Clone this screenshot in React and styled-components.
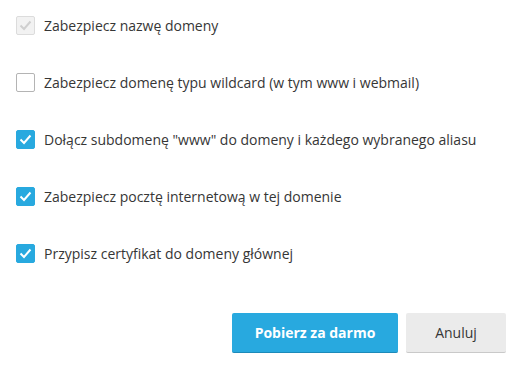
import React from "react";
import styled, { createGlobalStyle } from "styled-components";

const Global = createGlobalStyle`
  body {
    margin: 0;
    background: #fff;
    font-family: "Open Sans", "Liberation Sans", sans-serif;
    color: #363636;
  }
`;

const Dialog = styled.div`
  width: 517px;
  height: 369px;
  box-sizing: border-box;
  padding: 16px 11px 0 16px;
  display: flex;
  flex-direction: column;
`;

const Options = styled.div`
  display: flex;
  flex-direction: column;
  gap: 38px;
`;

const Row = styled.label`
  display: flex;
  align-items: center;
  gap: 9px;
  height: 19px;
  font-size: 14px;
  line-height: 19px;
`;

const Box = styled.span`
  width: 19px;
  height: 19px;
  box-sizing: border-box;
  border-radius: 2px;
  display: flex;
  align-items: center;
  justify-content: center;
  flex-shrink: 0;
  border: 1px solid
    ${p => (p.$state === "checked" ? "#28a9df" : p.$state === "disabled" ? "#dcdcdc" : "#b4b4b4")};
  background: ${p => (p.$state === "checked" ? "#28a9df" : p.$state === "disabled" ? "#f2f2f2" : "#fff")};
`;

const Actions = styled.div`
  margin-top: 50px;
  display: flex;
  justify-content: flex-end;
  gap: 8px;
`;

const Button = styled.button`
  height: 40px;
  width: ${p => p.$width}px;
  box-sizing: border-box;
  border: none;
  border-radius: 2px;
  font-family: "Open Sans", "Liberation Sans", sans-serif;
  font-size: 14px;
  font-weight: ${p => (p.$primary ? 700 : 400)};
  color: ${p => (p.$primary ? "#fff" : "#363636")};
  background: ${p => (p.$primary ? "#28a9df" : "#ebebeb")};
  border-bottom: 1px solid ${p => (p.$primary ? "#1d8ab9" : "#c9c9c9")};
`;

const Check = ({ color }) => (
  <svg width="13" height="11" viewBox="0 0 13 11">
    <path d="M1.5 5.5 L5 9 L11.5 1.5" fill="none" stroke={color} strokeWidth="2" />
  </svg>
);

const options = [
  { label: "Zabezpiecz nazwę domeny", state: "disabled" },
  { label: "Zabezpiecz domenę typu wildcard (w tym www i webmail)", state: "off" },
  { label: 'Dołącz subdomenę "www" do domeny i każdego wybranego aliasu', state: "checked" },
  { label: "Zabezpiecz pocztę internetową w tej domenie", state: "checked" },
  { label: "Przypisz certyfikat do domeny głównej", state: "checked" }
];

export default function App() {
  return (
    <Dialog>
      <Global />
      <Options>
        {options.map(o => (
          <Row key={o.label}>
            <Box $state={o.state}>
              {o.state === "checked" && <Check color="#fff" />}
              {o.state === "disabled" && <Check color="#cfcfcf" />}
            </Box>
            {o.label}
          </Row>
        ))}
      </Options>
      <Actions>
        <Button $primary $width={166}>Pobierz za darmo</Button>
        <Button $width={100}>Anuluj</Button>
      </Actions>
    </Dialog>
  );
}
